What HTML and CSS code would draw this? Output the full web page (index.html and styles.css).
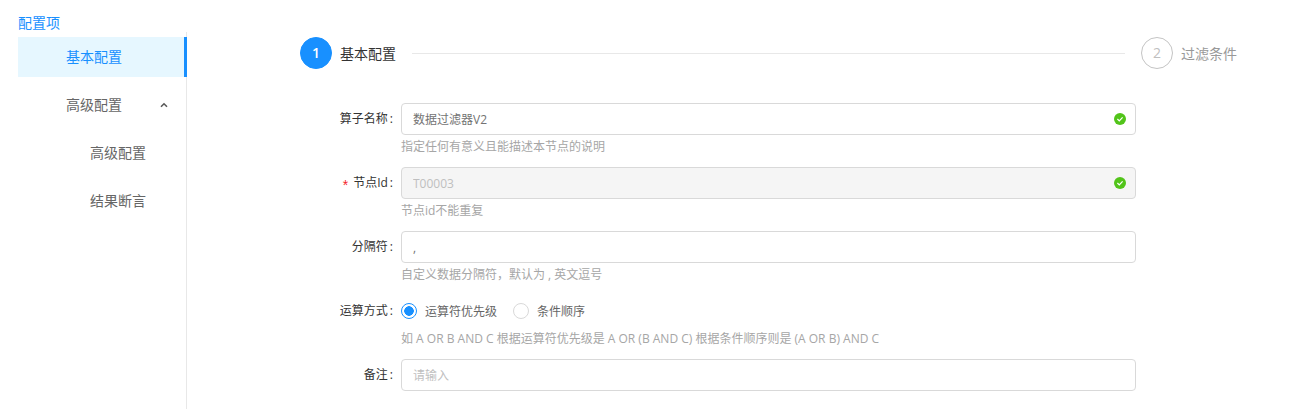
FILE: index.html
```html
<!DOCTYPE html>
<html lang="zh-CN">
<head>
    <meta charset="UTF-8">
    <meta name="viewport" content="width=device-width, initial-scale=1.0">
    <title>配置项</title>
    <link rel="stylesheet" href="styles.css">
</head>
<body>
    <div class="page">
        <aside class="sidebar">
            <div class="sidebar-title">配置项</div>
            <ul class="menu">
                <li class="menu-item active">基本配置</li>
                <li class="menu-item submenu-title">
                    <span>高级配置</span>
                    <svg class="chevron" width="8" height="6" viewBox="0 0 8 6"><path d="M1 4.8 L4 1.8 L7 4.8" fill="none" stroke="#595959" stroke-width="1.6"/></svg>
                </li>
                <li class="menu-item sub">高级配置</li>
                <li class="menu-item sub">结果断言</li>
            </ul>
        </aside>

        <main class="content">
            <div class="steps">
                <div class="step-icon current">1</div>
                <div class="step-label current-label">基本配置</div>
                <div class="step-line"></div>
                <div class="step-icon waiting">2</div>
                <div class="step-label waiting-label">过滤条件</div>
            </div>

            <form class="form">
                <div class="form-item">
                    <label class="form-label">算子名称</label>
                    <div class="form-control">
                        <div class="input-wrap">
                            <input class="input" type="text" value="数据过滤器V2">
                            <svg class="check" width="12" height="12" viewBox="0 0 12 12"><circle cx="6" cy="6" r="6" fill="#52c41a"/><path d="M3.4 6 L5.3 7.9 L8.6 4.4" fill="none" stroke="#fff" stroke-width="1.2"/></svg>
                        </div>
                        <div class="help">指定任何有意义且能描述本节点的说明</div>
                    </div>
                </div>

                <div class="form-item">
                    <label class="form-label"><span class="required">*</span>节点Id</label>
                    <div class="form-control">
                        <div class="input-wrap">
                            <input class="input" type="text" value="T00003" disabled>
                            <svg class="check" width="12" height="12" viewBox="0 0 12 12"><circle cx="6" cy="6" r="6" fill="#52c41a"/><path d="M3.4 6 L5.3 7.9 L8.6 4.4" fill="none" stroke="#fff" stroke-width="1.2"/></svg>
                        </div>
                        <div class="help">节点id不能重复</div>
                    </div>
                </div>

                <div class="form-item">
                    <label class="form-label">分隔符</label>
                    <div class="form-control">
                        <div class="input-wrap">
                            <input class="input" type="text" value=",">
                        </div>
                        <div class="help">自定义数据分隔符，默认为 , 英文逗号</div>
                    </div>
                </div>

                <div class="form-item">
                    <label class="form-label">运算方式</label>
                    <div class="form-control">
                        <div class="radios">
                            <span class="radio checked"></span>
                            <span class="radio-text">运算符优先级</span>
                            <span class="radio"></span>
                            <span class="radio-text">条件顺序</span>
                        </div>
                        <div class="help">如 A OR B AND C 根据运算符优先级是 A OR (B AND C) 根据条件顺序则是 (A OR B) AND C</div>
                    </div>
                </div>

                <div class="form-item">
                    <label class="form-label">备注</label>
                    <div class="form-control">
                        <div class="input-wrap">
                            <input class="input" type="text" placeholder="请输入">
                        </div>
                    </div>
                </div>
            </form>
        </main>
    </div>
</body>
</html>
```

FILE: styles.css
```css
:root {
    --primary: #1890ff;
    --border: #d9d9d9;
    --text: #666666;
    --muted: #a6a6a6;
}
* {
    box-sizing: border-box;
}
html, body {
    height: 100%;
}
body {
    font-family: 'Open Sans', 'Noto Sans CJK SC', sans-serif;
    color: var(--text);
    background-color: #ffffff;
    margin: 0;
    overflow: hidden;
}
.page {
    display: flex;
    height: 100%;
}

/* Left menu */
.sidebar {
    display: flex;
    flex-direction: column;
    width: 169px;
    margin-left: 18px;
    padding-top: 13px;
    flex-shrink: 0;
}
.sidebar-title {
    color: var(--primary);
    font-size: 14px;
    line-height: 19px;
}
.menu {
    flex: 1;
    list-style: none;
    margin: 0;
    padding: 5px 0 0;
    border-right: 1px solid #e8e8e8;
}
.menu-item {
    height: 40px;
    line-height: 40px;
    margin-bottom: 8px;
    padding-left: 48px;
    font-size: 14px;
}
.menu-item.sub {
    padding-left: 72px;
}
.menu-item.active {
    width: 169px;
    color: var(--primary);
    background-color: #e6f7ff;
    border-right: 3px solid var(--primary);
}
.submenu-title {
    display: flex;
    align-items: center;
    justify-content: space-between;
    padding-right: 18px;
}

/* Steps */
.content {
    width: 1050px;
    padding: 37px 0 0 113px;
}
.steps {
    display: flex;
    align-items: center;
    height: 32px;
}
.step-icon {
    width: 32px;
    height: 32px;
    line-height: 30px;
    border-radius: 50%;
    border: 1px solid;
    text-align: center;
    font-size: 14px;
    flex-shrink: 0;
}
.current {
    background-color: var(--primary);
    border-color: var(--primary);
    color: #ffffff;
    font-weight: 600;
}
.waiting {
    border-color: #c4c4c4;
    color: #bfbfbf;
}
.step-label {
    margin-left: 8px;
    font-size: 14px;
    white-space: nowrap;
}
.current-label {
    color: #333333;
}
.waiting-label {
    color: #999999;
}
.step-line {
    flex: 1;
    height: 1px;
    margin: 0 16px;
    background-color: #e8e8e8;
}

/* Form */
.form {
    margin-top: 34px;
}
.form-item {
    display: flex;
    margin-bottom: 10px;
}
.form-label {
    width: 101px;
    flex-shrink: 0;
    height: 32px;
    line-height: 31px;
    text-align: right;
    font-size: 12px;
    color: #333333;
    white-space: nowrap;
}
.form-label::after {
    content: ":";
    margin: 0 8px 0 2px;
}
.required {
    font-family: 'Liberation Sans', sans-serif;
    font-size: 14px;
    line-height: 1;
    vertical-align: -3px;
    color: #f5222d;
    margin-right: 5px;
}
.form-control {
    width: 735px;
    flex-shrink: 0;
}
.input-wrap {
    position: relative;
}
.input {
    display: block;
    width: 100%;
    height: 32px;
    padding: 0 11px;
    border: 1px solid var(--border);
    border-radius: 4px;
    font-family: inherit;
    font-size: 12px;
    color: #737373;
    background-color: #ffffff;
}
.input:disabled {
    background-color: #f5f5f5;
    color: #bfbfbf;
}
.input::placeholder {
    color: #bfbfbf;
}
.check {
    position: absolute;
    top: 10px;
    right: 10px;
}
.help {
    height: 22px;
    padding-top: 1px;
    line-height: 22px;
    font-size: 12px;
    color: var(--muted);
    white-space: nowrap;
}
.radios {
    display: flex;
    align-items: center;
    height: 32px;
}
.radio {
    width: 16px;
    height: 16px;
    border: 1px solid var(--border);
    border-radius: 50%;
    flex-shrink: 0;
}
.radio.checked {
    border-color: var(--primary);
    background: radial-gradient(circle, var(--primary) 4.5px, #ffffff 5px);
}
.radio-text {
    margin: 0 16px 0 8px;
    font-size: 12px;
}
```
